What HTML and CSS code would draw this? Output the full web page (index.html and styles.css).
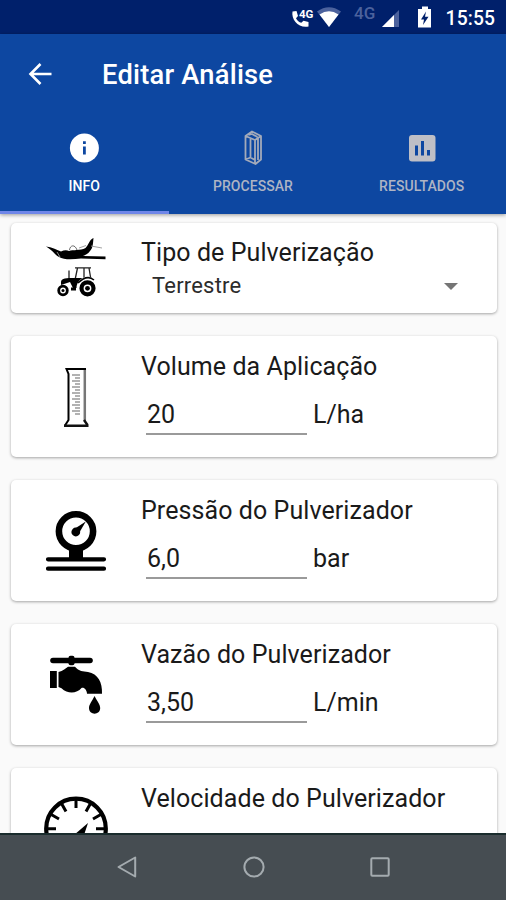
FILE: index.html
```html
<!DOCTYPE html>
<html lang="pt-BR">
<head>
<meta charset="utf-8">
<title>Editar Análise</title>
<link rel="stylesheet" href="styles.css">
</head>
<body>
<div class="screen">
  <header class="status">
    <svg class="status-icons" viewBox="288 0 152 34" fill="#fff">
      <path d="M292.5 11.5 L296.5 11 L298 16 L296 18.2 C297.4 20.7 299 22 301.3 22.8 L303.5 20.8 L308.5 22 V26.5 C299 28.6 291 20 292.5 11.5Z"/>
      <text class="call-net" x="299" y="17.5">4G</text>
      <path d="M317 11.5 Q329 3 341 11.5 L329 27Z" fill="#4c629d"/>
      <path d="M319.5 14.5 Q329 8 338.5 14.5 L329 27Z"/>
      <text class="net" x="354" y="18.5">4G</text>
      <path d="M399 10 V27 H382Z" fill="#4c629d"/>
      <path d="M394 15 V27 H382Z"/>
      <path d="M418 9 H422 V6.5 H428 V9 H431 V27.5 H418Z"/>
      <path d="M426 11.5 L421 19.5 H424 L423 25 L428.5 16.7 H425Z" fill="#00206b"/>
    </svg>
    <span class="clock">15:55</span>
  </header>

  <div class="appbar">
    <div class="titlebar">
      <svg class="back" viewBox="0 0 26 26" fill="none" stroke="#fff" stroke-width="2.6"><path d="M24.5 13H4M13.5 3L3.5 13L13.5 23"/></svg>
      <h1>Editar Análise</h1>
    </div>
    <nav class="tabs">
      <div class="tab active">
        <svg class="tab-icon" viewBox="0 0 36 36"><circle cx="18.4" cy="18" r="14.5" fill="#fff"/><path d="M17 11.3h2.8v2.6h-2.8zM17 16.4h2.8v8.2h-2.8z" fill="#0d47a1"/></svg>
        <span>INFO</span>
      </div>
      <div class="tab">
        <svg class="tab-icon" viewBox="0 0 36 36" fill="none" stroke="#a3aaba" stroke-width="1.8" stroke-linejoin="round"><path d="M10.5 6L17 1.5L26 6V29.5L20.5 34L10.5 29.5ZM10.5 6L20 10L26 6M20 10V34M15.5 8V27.5M13.5 5L17 4L22.5 7M15.5 27.5L10.5 29.5M15.5 27.5L20 30M23 8.5V30"/></svg>
        <span>PROCESSAR</span>
      </div>
      <div class="tab">
        <svg class="tab-icon" viewBox="0 0 36 36"><rect x="5" y="5" width="26.5" height="26.5" rx="3" fill="#bebfc6"/><path d="M11 15.5h3v10h-3zM17 11h3v14.5h-3zM23 20h3v5.5h-3z" fill="#0d47a1"/></svg>
        <span>RESULTADOS</span>
      </div>
    </nav>
  </div>

  <main>
    <section class="card short">
      <svg class="icon" viewBox="36 223 80 90">
        <path d="M46 246.5 C52 247 56 249.5 61 251.5 C64 250 67 250 69 251 C73 249.5 80 251 85.5 248 C88.5 245 89.5 239.5 93.5 238 C93 243 93 248 90 251 C88 254 85 255 83 256 L105.5 256.5 V259.3 L81 258.6 C73 259.4 64 260.2 59 257 C55 255 54 251.5 46 246.5Z"/>
        <path d="M69.5 250 C70 245 75 244 77 250" fill="#fff" stroke="#444" stroke-width=".8"/>
        <path d="M79 248 L86 245.5M91 246 L102 248M57 252 L60 257" fill="none" stroke="#999" stroke-width=".9"/>
        <path d="M75 267.8 H91M77.5 268 L75 280M89 268 L91 280M84 268 V279M69 279 V270.5" fill="none" stroke="#222" stroke-width="1.3"/>
        <path d="M61 282 C61 278 67 278 74 278 H91 V283 L78 288 H73 L70 282 L61 285Z"/>
        <circle cx="87.5" cy="288" r="11" fill="#fff"/>
        <path d="M78 283 Q87 274 94 280" fill="none" stroke="#000" stroke-width="1.5"/>
        <circle cx="87.5" cy="288.3" r="6" fill="#fff" stroke="#000" stroke-width="4.2"/><circle cx="87.5" cy="288.3" r="2.4"/>
        <circle cx="63" cy="290.5" r="4.3" fill="#fff" stroke="#000" stroke-width="2.8"/><circle cx="63" cy="290.5" r="1.5"/>
        <path d="M71 289 H76" stroke="#000" stroke-width="3"/>
      </svg>
      <div class="body">
        <h2>Tipo de Pulverização</h2>
        <div class="select"><span>Terrestre</span><i class="caret"></i></div>
      </div>
    </section>

    <section class="card">
      <svg class="icon" viewBox="36 336 80 121" fill="none">
        <path d="M84.8 369 V421" stroke="#777" stroke-width="2.5"/>
        <path d="M86 369 H66.5 L68.5 374 V420 L65 425.5" stroke="#000" stroke-width="2"/>
        <path d="M64 425.8 H88.5M84 420 L87.5 425" stroke="#111" stroke-width="2.4"/>
        <path d="M72 375H80M75 378H80M72 381H80M75 384H80M72 387H80M75 390H80M72 393H80M75 396H80M72 399H80M75 402H80M72 405H80M75 408H80M72 411H80M75 414H80" stroke="#666" stroke-width="1.1"/>
      </svg>
      <div class="body">
        <h2>Volume da Aplicação</h2>
        <div class="field"><span class="input">20</span><span class="unit">L/ha</span></div>
      </div>
    </section>

    <section class="card">
      <svg class="icon" viewBox="36 480 80 121">
        <circle cx="76" cy="531.3" r="17.1" fill="none" stroke="#000" stroke-width="6.6"/>
        <path d="M69 546 H83 V560 H69Z"/>
        <circle cx="75.8" cy="532" r="4.4"/><path d="M73.5 529.5 L85.8 521.5 L78.5 534Z"/>
        <path d="M48 559.3H104M48 568.7H104" stroke="#000" stroke-width="4.2" stroke-linecap="round"/>
      </svg>
      <div class="body">
        <h2>Pressão do Pulverizador</h2>
        <div class="field"><span class="input">6,0</span><span class="unit">bar</span></div>
      </div>
    </section>

    <section class="card">
      <svg class="icon" viewBox="36 624 80 121">
        <path d="M53 660.5H90" stroke="#000" stroke-width="5.6" stroke-linecap="round"/>
        <rect x="68.5" y="655.8" width="6" height="9.5" rx="2"/>
        <rect x="50" y="671" width="6.8" height="17"/>
        <path d="M58.5 672 C63 671 66 668 68 666.8 H75 C79 671.5 83 671.5 88 672 C98 674 102.5 682 102 693.8 H87 C87 690 84 687 81.5 688 C77 693.5 68 694.5 61.5 688.3 L58.5 687Z"/>
        <path d="M94.5 696 C97 701 100.2 704.5 100.2 708 C100.2 715.5 89 715.5 89 708 C89 704.5 92.2 701 94.5 696Z"/>
      </svg>
      <div class="body">
        <h2>Vazão do Pulverizador</h2>
        <div class="field"><span class="input">3,50</span><span class="unit">L/min</span></div>
      </div>
    </section>

    <section class="card">
      <svg class="icon" viewBox="36 768 80 121" fill="none" stroke="#000">
        <circle cx="76" cy="828.5" r="29.8" stroke-width="4.2"/>
        <path d="M76 799V808M61.5 803.5L66 811.5M90.5 803.5L86 811.5M50.8 814.3L59 819M101.2 814.3L93 819M46 828.8H56M106 828.8H96" stroke-width="3"/>
        <path d="M88 823 L84 835 H74Z" fill="#000" stroke="none"/>
      </svg>
      <div class="body">
        <h2>Velocidade do Pulverizador</h2>
        <div class="field"><span class="input"></span></div>
      </div>
    </section>
  </main>

  <footer class="navbar">
    <svg viewBox="0 0 24 24"><path d="M20.2 2.5V21.5L3.5 12Z"/></svg>
    <svg viewBox="0 0 24 24"><circle cx="12" cy="12" r="9.6"/></svg>
    <svg viewBox="0 0 24 24"><rect x="3.3" y="3.3" width="17.4" height="17.4" rx="1"/></svg>
  </footer>
</div>
</body>
</html>
```
FILE: styles.css
```css
* { box-sizing: border-box; }
body { margin: 0; font-family: Roboto, sans-serif; color: #1a1a1a; }
h1, h2 { margin: 0; }
.screen { width: 506px; height: 900px; display: flex; flex-direction: column; overflow: hidden; background: #fafafa; }

.status { height: 34px; flex: none; background: #00206b; display: flex; align-items: center; justify-content: flex-end; padding-right: 11px; color: #fff; }
.status-icons { width: 152px; height: 34px; margin-right: 6px; }
.call-net { font-size: 11.5px; font-weight: 700; }
.net { font-size: 17px; font-weight: 500; fill: #4c629d; }
.clock { font-size: 19.3px; font-weight: 500; letter-spacing: .1px; padding-top: 3px; }

.appbar { height: 180px; flex: none; background: #0d47a1; color: #fff; display: flex; flex-direction: column; box-shadow: 0 1px 4px rgba(0,0,0,.4); z-index: 1; }
.titlebar { height: 80px; display: flex; align-items: center; padding-left: 27px; }
.back { width: 26px; height: 26px; margin-right: 49px; }
.titlebar h1 { font-size: 27.3px; font-weight: 500; line-height: 32px; padding-top: 2px; letter-spacing: .22px; }
.tabs { flex: 1; display: grid; grid-template-columns: repeat(3, 1fr); }
.tab { display: flex; flex-direction: column; align-items: center; padding-top: 16px; color: #aeb4c4; font-size: 14px; line-height: 18px; font-weight: 500; letter-spacing: .05px; }
.tab-icon { width: 36px; height: 36px; margin-bottom: 11px; }
.tab.active { color: #fff; border-bottom: 3px solid #6f86e8; }

main { flex: 1; min-height: 0; overflow: hidden; padding: 9px 9px 0 11px; display: flex; flex-direction: column; gap: 23px; }
.card { height: 121px; flex: none; display: flex; background: #fff; border-radius: 5px; box-shadow: 0 1px 3px rgba(0,0,0,.35); padding-left: 25px; }
.card.short { height: 90px; }
.icon { width: 80px; height: 100%; margin-right: 25px; flex: none; }
.body { flex: 1; padding-top: 15px; }
.short .body { padding-top: 14px; }
.body h2 { font-size: 25px; font-weight: 400; line-height: 32px; white-space: nowrap; letter-spacing: .08px; }
.select { display: flex; align-items: center; justify-content: space-between; padding: 1px 39px 0 11px; font-size: 22px; line-height: 32px; letter-spacing: .2px; color: #2c2c2c; }
.caret { border: 7px solid transparent; border-top-color: #757575; border-bottom: 0; }
.field { display: flex; align-items: flex-start; font-size: 25px; line-height: 32px; margin: 16px 0 0 5px; }
.input { width: 161px; height: 36px; border-bottom: 2px solid #9a9a9a; padding-left: 1px; margin-right: 6px; }

.navbar { height: 67px; flex: none; background: #464d52; border-top: 2px solid #1a2c2d; display: flex; justify-content: center; align-items: center; gap: 102.5px; padding: 0 0 2px 1px; z-index: 1; }
.navbar svg { width: 24px; height: 24px; fill: none; stroke: #a4abaf; stroke-width: 2; stroke-linejoin: round; }
```
